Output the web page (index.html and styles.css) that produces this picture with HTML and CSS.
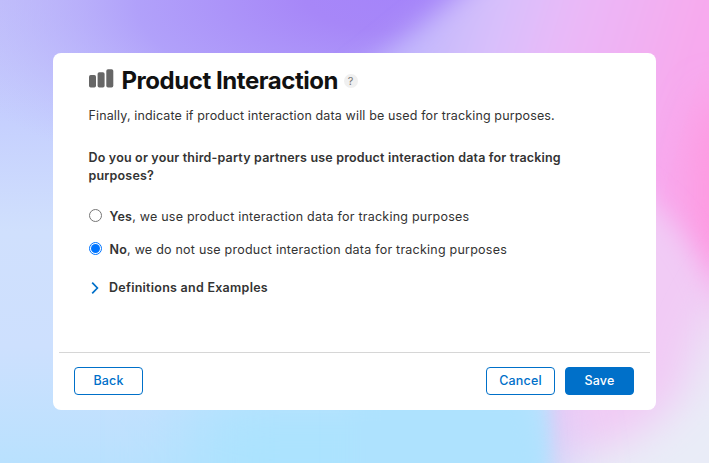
FILE: index.html
```html
<!DOCTYPE html>
<html lang="en">
<head>
<meta charset="utf-8">
<title>Product Interaction</title>
<link rel="stylesheet" href="styles.css">
</head>
<body>
<svg class="backdrop" viewBox="0 0 709 463" preserveAspectRatio="none" aria-hidden="true">
  <defs>
    <linearGradient id="base" x1="0" y1="0" x2="0" y2="1">
      <stop offset="0" stop-color="#c3c3fb"/>
      <stop offset=".25" stop-color="#c5cffe"/>
      <stop offset=".5" stop-color="#d0e0fd"/>
      <stop offset=".75" stop-color="#cde0fe"/>
      <stop offset="1" stop-color="#b9e1fe"/>
    </linearGradient>
    <radialGradient id="violet" gradientUnits="userSpaceOnUse" cx="0" cy="0" r="1" gradientTransform="translate(400 -10) rotate(-3) scale(480 200)">
      <stop offset="0" stop-color="#a584fa"/>
      <stop offset=".2" stop-color="#a787f8"/>
      <stop offset=".55" stop-color="#b09ffa" stop-opacity=".95"/>
      <stop offset="1" stop-color="#c0bdfb" stop-opacity="0"/>
    </radialGradient>
    <linearGradient id="pink" gradientUnits="userSpaceOnUse" x1="430" y1="10" x2="690" y2="90">
      <stop offset="0" stop-color="#c3b8fc"/>
      <stop offset=".25" stop-color="#d8c0fb"/>
      <stop offset=".5" stop-color="#e9b9f8"/>
      <stop offset="1" stop-color="#f8a9ed"/>
    </linearGradient>
    <filter id="soft" x="-50%" y="-50%" width="200%" height="200%"><feGaussianBlur stdDeviation="13"/></filter>
    <filter id="softer" x="-50%" y="-50%" width="200%" height="200%"><feGaussianBlur stdDeviation="20"/></filter>
    <filter id="softest" x="-80%" y="-80%" width="260%" height="260%"><feGaussianBlur stdDeviation="38"/></filter>
  </defs>
  <rect width="709" height="463" fill="url(#base)"/>
  <rect width="709" height="200" fill="url(#violet)"/>
  <path d="M500-40H800V500H560V200L340 90Z" fill="url(#pink)" filter="url(#soft)"/>
  <ellipse cx="722" cy="190" rx="32" ry="95" fill="#fe9ae0" filter="url(#softer)"/>
  <path d="M630 185Q690 225 715 300V490H553V390Z" fill="#f1cbf5" filter="url(#soft)"/>
  <path d="M760 250Q703 310 692 370T560 463V530H780Z" fill="#e9ecf7" filter="url(#softer)"/>
  <path d="M190 390H525Q540 430 548 530H190Z" fill="#abe3fe" filter="url(#softest)"/>
  <path d="M350 390H530Q540 430 542 530H350Z" fill="#aee2fe" filter="url(#soft)"/>
</svg>
<main class="dialog">
  <div class="content">
    <header class="heading">
      <svg class="bars" viewBox="0 0 25 19" aria-hidden="true">
        <rect x="0" y="6" width="7" height="12.5" rx="1.7"/>
        <rect x="8.6" y="3.2" width="7" height="15.3" rx="1.7"/>
        <rect x="17.3" y=".3" width="7" height="18.2" rx="1.7"/>
      </svg>
      <h1>Product Interaction</h1>
      <span class="help">?</span>
    </header>
    <p class="intro">Finally, indicate if product interaction data will be used for tracking purposes.</p>
    <p class="question">Do you or your third-party partners use product interaction data for tracking purposes?</p>
    <div class="option"><span class="radio"></span><span><b>Yes</b>, we use product interaction data for tracking purposes</span></div>
    <div class="option"><span class="radio checked"></span><span><b>No</b>, we do not use product interaction data for tracking purposes</span></div>
    <div class="disclosure">
      <svg class="chevron" viewBox="0 0 8 12" aria-hidden="true"><path d="M1.2 .6 6.4 6 1.2 11.4"/></svg>
      <span>Definitions and Examples</span>
    </div>
  </div>
  <footer class="actions">
    <button class="button">Back</button>
    <button class="button cancel">Cancel</button>
    <button class="button primary">Save</button>
  </footer>
</main>
</body>
</html>
```
FILE: styles.css
```css
* { box-sizing: border-box; }
body {
  margin: 0;
  height: 463px;
  padding: 53px;
  overflow: hidden;
  font-family: Inter, "Liberation Sans", sans-serif;
  font-size: 12.5px;
  line-height: 18px;
  color: #333;
}
.backdrop { position: absolute; inset: 0; width: 100%; height: 463px; z-index: -1; }
.dialog {
  display: flex;
  flex-direction: column;
  width: 603px;
  height: 357px;
  padding: 0 6px;
  border-radius: 8px;
  background: #fff;
}
.content { flex: 1; padding: 13px 29.5px 0; }
.heading { display: flex; align-items: center; height: 30px; }
.bars { width: 25px; height: 19px; margin: -5px 8px 0 0; fill: #666; }
h1 { margin: 0; font-size: 24px; line-height: 30px; font-weight: 650; letter-spacing: -.45px; color: #111; white-space: nowrap; }
.help {
  width: 14px; height: 14px; margin-left: 5.5px;
  border-radius: 50%; background: #f0f0f0; color: #777;
  font-size: 11px; line-height: 14px; text-align: center;
}
p { margin: 0; }
.intro { margin-top: 11px; letter-spacing: .14px; white-space: nowrap; }
.question { margin-top: 24px; font-weight: 600; width: 490px; letter-spacing: .18px; }
b { font-weight: 600; }
.option { display: flex; align-items: center; height: 18px; margin-top: 23px; gap: 8px; letter-spacing: .23px; white-space: nowrap; }
.option + .option { margin-top: 15px; }
.radio {
  display: grid; place-items: center; width: 13px; height: 13px; margin-top: -3px;
  border: 1px solid #767676; border-radius: 50%;
}
.checked { border-color: #0075ff; }
.checked::after { content: ""; width: 9px; height: 9px; border-radius: 50%; background: #0075ff; }
.disclosure { display: flex; align-items: center; gap: 10.5px; margin-top: 20px; padding-left: 2px; font-weight: 600; letter-spacing: .26px; }
.chevron { width: 8px; height: 12px; fill: none; stroke: #0070c9; stroke-width: 1.7; }
.actions { display: flex; gap: 10px; height: 58px; padding: 14px 16px 0 15px; border-top: 1px solid #d6d6d6; }
.button {
  width: 69px; height: 28px; padding: 0; border: 1px solid #0070c9; border-radius: 4px;
  background: #fff; color: #0070c9; font: 500 12.5px/18px Inter, sans-serif; letter-spacing: .15px;
}
.cancel { margin-left: auto; }
.primary { background: #0070c9; color: #fff; }
```
